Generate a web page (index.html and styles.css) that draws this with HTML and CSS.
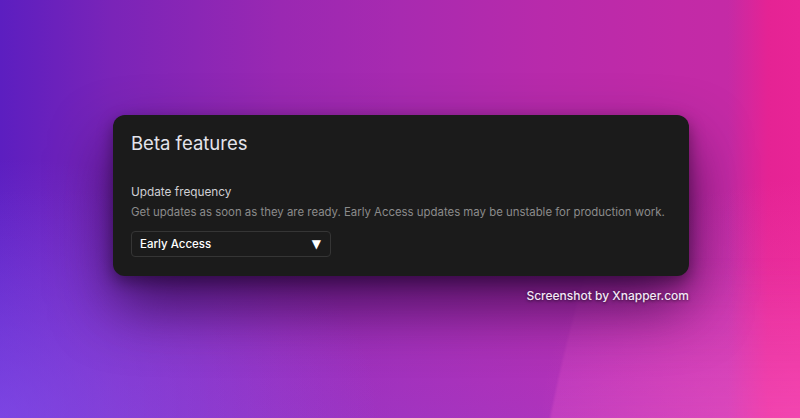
FILE: index.html
```html
<!DOCTYPE html>
<html>
<head>
<meta charset="utf-8">
<link rel="stylesheet" href="styles.css">
</head>
<body>
<div class="stage">
  <div class="blob"></div>
  <div class="frame">
    <section class="card">
      <h1 class="title">Beta features</h1>
      <div class="field">
        <div class="label">Update frequency</div>
        <div class="desc">Get updates as soon as they are ready. Early Access updates may be unstable for production work.</div>
        <div class="select">
          <span class="value">Early Access</span>
          <span class="arrow">▼</span>
        </div>
      </div>
    </section>
    <div class="credit">Screenshot by Xnapper.com</div>
  </div>
</div>
</body>
</html>
```
FILE: styles.css
```css
html, body {
  margin: 0;
  padding: 0;
}
body {
  width: 800px;
  height: 418px;
  overflow: hidden;
  font-family: Inter, "Liberation Sans", sans-serif;
}
.stage {
  position: relative;
  width: 800px;
  height: 418px;
  overflow: hidden;
  background:
    radial-gradient(ellipse 260px 240px at 100% 100%, rgba(246,80,180,0.55), rgba(246,80,180,0) 100%),
    linear-gradient(90deg, rgba(232,34,146,0) 91%, rgba(232,34,146,0.9) 96%, #e82496 100%),
    radial-gradient(ellipse 380px 260px at 0% 100%, rgba(140,90,245,0.55), rgba(140,90,245,0) 100%),
    linear-gradient(180deg, rgba(140,80,240,0) 45%, rgba(140,80,240,0.25) 100%),
    linear-gradient(90deg, #5c1ec0 0%, #7a24b8 14%, #9a28b2 35%, #a82ab0 50%, #b82aab 68%, #c22aa7 85%, #c82aa4 100%);
}
.blob {
  position: absolute;
  left: 523px;
  top: -778px;
  width: 2956px;
  height: 2956px;
  border-radius: 50%;
  filter: blur(1px);
  background: linear-gradient(180deg, rgba(255,110,210,0) 35%, rgba(255,100,210,0.2) 39.5%, rgba(255,95,200,0.42) 46%);
}
.frame {
  position: relative;
  display: flex;
  flex-direction: column;
  align-items: flex-end;
  width: 576px;
  padding: 115px 0 0 113px;
}
.card {
  box-sizing: border-box;
  width: 576px;
  height: 161px;
  background: #1b1b1b;
  border-radius: 12px;
  padding: 16px 18px;
  box-shadow: 0 30px 60px rgba(30, 0, 50, 0.7), 0 6px 16px rgba(0,0,0,0.4);
}
.title {
  margin: 0;
  font-size: 18.5px;
  line-height: 24px;
  font-weight: 400;
  color: #e4e4ec;
}
.field {
  margin-top: 29px;
}
.label {
  font-size: 11.8px;
  line-height: 16px;
  color: #cfcfd4;
}
.desc {
  margin-top: 5px;
  font-size: 11.4px;
  line-height: 14px;
  color: #8b8b8b;
  white-space: nowrap;
}
.select {
  margin-top: 12px;
  box-sizing: border-box;
  width: 200px;
  height: 26px;
  border: 1px solid #353535;
  border-radius: 4px;
  display: flex;
  align-items: center;
  justify-content: space-between;
  padding: 0 9px 0 8px;
  color: #ffffff;
}
.value {
  font-size: 11.5px;
  font-weight: 500;
}
.arrow {
  font-size: 12px;
  font-family: "DejaVu Sans", sans-serif;
}
.credit {
  margin-top: 12px;
  font-size: 12px;
  font-weight: 500;
  color: #f2e8f6;
  text-shadow: 0 1px 3px rgba(0,0,0,0.6);
}
```
